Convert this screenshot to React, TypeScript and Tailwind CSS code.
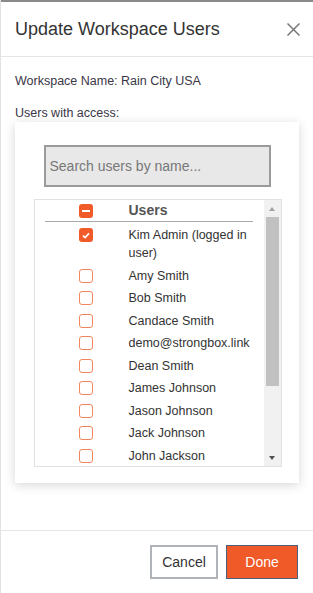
import React from 'react'

const users = [
  'Amy Smith',
  'Bob Smith',
  'Candace Smith',
  'demo@strongbox.link',
  'Dean Smith',
  'James Johnson',
  'Jason Johnson',
  'Jack Johnson',
  'John Jackson',
]

const Box = ({ state }: { state: 'on' | 'off' | 'some' }) => {
  if (state === 'off') {
    return <div className="w-[14px] h-[14px] rounded-[3px] border-[1.5px] border-[#f4865f] bg-white" />
  }
  return (
    <div className="w-[14px] h-[14px] rounded-[3px] bg-[#f15a29] flex items-center justify-center">
      {state === 'on' ? (
        <svg width="8" height="7" viewBox="0 0 8 7">
          <path d="M1 3.6 L3.1 5.6 L7 1.4" stroke="white" strokeWidth="1.6" fill="none" />
        </svg>
      ) : (
        <div className="w-[8px] h-[2px] bg-white" />
      )}
    </div>
  )
}

const Row = ({ name, checked }: { name: string; checked?: boolean }) => (
  <div className="flex items-start py-[2.25px]">
    <div className="w-[82px] flex justify-center pt-[2px]">
      <Box state={checked ? 'on' : 'off'} />
    </div>
    <div className="w-[126px] pl-[2px] pr-[2px] text-[12.5px] leading-[18px] text-[#333]">{name}</div>
  </div>
)

const App = () => {
  return (
    <div
      className="w-[313px] h-[593px] bg-white border-l border-[#e2e2e2] flex flex-col overflow-hidden"
      style={{ fontFamily: '"Liberation Sans", Arial, sans-serif' }}
    >
      <div className="h-[2px] bg-[#8a8a8a]" />
      {/* header */}
      <div className="h-[55px] flex items-center justify-between pl-[14px] pr-[13px] border-b border-[#e5e5e5]">
        <h1 className="text-[18px] text-[#333] leading-none">Update Workspace Users</h1>
        <svg width="13" height="13" viewBox="0 0 13 13">
          <path d="M0.5 0.5 L12.5 12.5 M12.5 0.5 L0.5 12.5" stroke="#777" strokeWidth="1.5" />
        </svg>
      </div>

      {/* body */}
      <div className="px-[14px] pt-[16px] flex-1">
        <p className="text-[12.5px] leading-[16px] text-[#3a3646]">Workspace Name: Rain City USA</p>
        <p className="mt-[16px] text-[12.5px] leading-[16px] text-[#3a3646]">Users with access:</p>

        <div className="mt-[1px] h-[361px] bg-white shadow-[0_2px_10px_rgba(0,0,0,0.16)] pt-[23px] flex flex-col items-center">
          <div className="w-[227px] h-[42px] bg-[#e8e8e8] border-2 border-[#9a9a9a] flex items-center pl-[4px]">
            <span className="text-[14px] text-[#777]">Search users by name...</span>
          </div>

          <div className="mt-[12px] w-[248px] h-[268px] border border-[#e2e2e2] flex overflow-hidden ml-[1px]">
            <div className="flex-1 pl-[10px] overflow-hidden">
              <div className="flex items-center h-[22px] border-b border-[#aaa] w-[208px]">
                <div className="w-[82px] flex justify-center">
                  <Box state="some" />
                </div>
                <div className="pl-[2px] text-[14px] font-bold text-[#555]">Users</div>
              </div>
              <div className="pt-[2px]">
                <Row name="Kim Admin (logged in user)" checked />
                {users.map((u) => (
                  <Row key={u} name={u} />
                ))}
              </div>
            </div>
            <div className="w-[17px] bg-[#f1f1f1] flex flex-col items-center">
              <div className="h-[17px] flex items-center justify-center">
                <div className="w-0 h-0 border-l-[3.5px] border-r-[3.5px] border-b-[4px] border-l-transparent border-r-transparent border-b-[#a3a3a3]" />
              </div>
              <div className="w-[13px] h-[169px] bg-[#c1c1c1]" />
              <div className="flex-1" />
              <div className="h-[17px] flex items-center justify-center">
                <div className="w-0 h-0 border-l-[3.5px] border-r-[3.5px] border-t-[4px] border-l-transparent border-r-transparent border-t-[#505050]" />
              </div>
            </div>
          </div>
        </div>
      </div>

      {/* footer */}
      <div className="h-[63px] border-t border-[#e5e5e5] flex justify-end items-start pt-[14px] pr-[15px] gap-[8px]">
        <button className="w-[68px] h-[34px] bg-white border-2 border-[#b0b3b8] text-[14px] text-[#333]">Cancel</button>
        <button className="w-[72px] h-[34px] bg-[#f05a28] border border-[#4a5f80] text-[14px] text-white">Done</button>
      </div>
    </div>
  )
}

export default App
